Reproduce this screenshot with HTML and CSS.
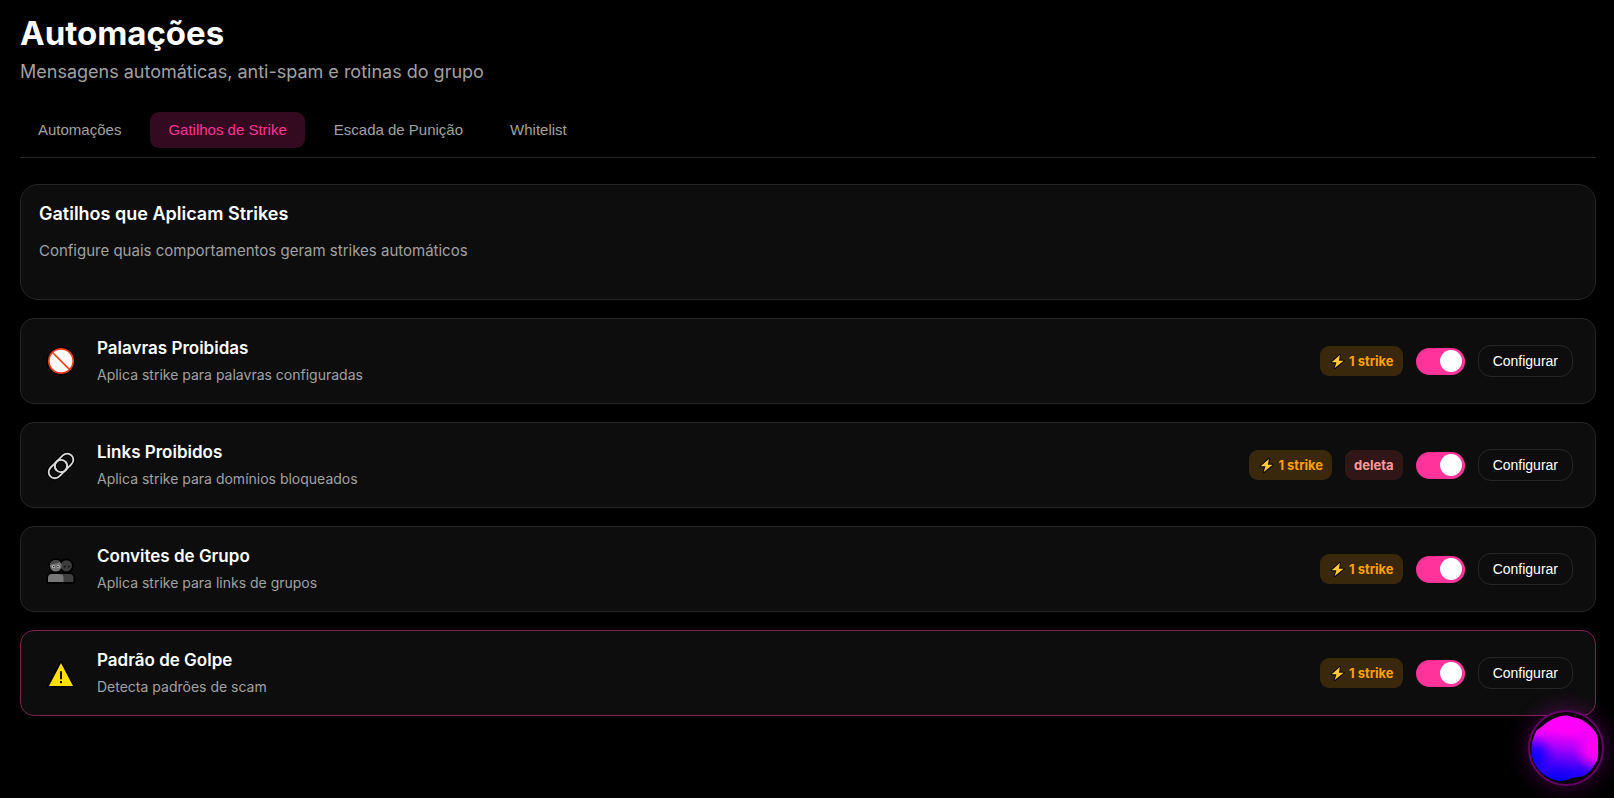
FILE: index.html
```html
<!DOCTYPE html>
<html lang="pt-BR">
<head>
<meta charset="utf-8">
<meta name="viewport" content="width=device-width, initial-scale=1">
<title>Automações</title>
<link rel="stylesheet" href="styles.css">
</head>
<body>
<svg class="sprite" aria-hidden="true">
  <symbol id="bolt" viewBox="0 0 16 16">
    <path d="M10.200 1.800 2.500 8.800H7L5.400 14.200 13.800 7.300H9.400z" fill="#ffc83d" stroke="#0a0a0a" stroke-width="2" stroke-linejoin="round"/>
    <path d="M10.200 1.800 2.500 8.800H7L5.400 14.200 13.800 7.300H9.400z" fill="#ffc83d"/>
  </symbol>
</svg>
<main class="page">
  <header>
    <h1 class="page-title">Automações</h1>
    <p class="page-subtitle">Mensagens automáticas, anti-spam e rotinas do grupo</p>
  </header>
  <nav class="tabs" aria-label="Seções">
    <button class="tab" type="button">Automações</button>
    <button class="tab tab-active" type="button">Gatilhos de Strike</button>
    <button class="tab" type="button">Escada de Punição</button>
    <button class="tab" type="button">Whitelist</button>
  </nav>
  <section class="list">
    <div class="intro">
      <h2 class="intro-title">Gatilhos que Aplicam Strikes</h2>
      <p class="intro-text">Configure quais comportamentos geram strikes automáticos</p>
    </div>

    <article class="rule">
      <svg class="rule-icon" viewBox="0 0 36 36" aria-hidden="true">
        <circle cx="18" cy="18" r="14.5" fill="#000"/>
        <circle cx="18" cy="18" r="12.2" fill="#fff" stroke="#f03a17" stroke-width="1.7"/>
        <path d="m9.5 9.5 17 17" stroke="#f03a17" stroke-width="1.7"/>
      </svg>
      <div class="rule-body">
        <h3 class="rule-title" id="r1">Palavras Proibidas</h3>
        <p class="rule-text">Aplica strike para palavras configuradas</p>
      </div>
      <div class="rule-actions">
        <span class="badge badge-strike"><svg class="bolt"><use href="#bolt"/></svg>1 strike</span>
        <input class="switch" type="checkbox" role="switch" aria-labelledby="r1" checked>
        <button class="config" type="button">Configurar</button>
      </div>
    </article>

    <article class="rule">
      <svg class="rule-icon" viewBox="-1 -2 38 38" aria-hidden="true">
        <g fill="none" transform="rotate(-45 18 18)">
          <g stroke="#000" stroke-width="4.6">
            <rect x="2.300" y="11.500" width="22.200" height="13" rx="6.500"/>
            <rect x="11.500" y="11.500" width="22.200" height="13" rx="6.500"/>
          </g>
          <g stroke="#d8d8d8" stroke-width="1.9">
            <path d="M22.500 13.200A6.500 6.500 0 0 0 18 11.500H8.800a6.500 6.500 0 0 0 0 13H18a6.500 6.500 0 0 0 6.500-6.500"/>
            <path d="M13.500 22.800A6.500 6.500 0 0 0 18 24.500h9.200a6.500 6.500 0 0 0 0-13H18a6.500 6.500 0 0 0-6.500 6.500"/>
            <circle cx="18" cy="18" r="6.500"/>
          </g>
        </g>
      </svg>
      <div class="rule-body">
        <h3 class="rule-title" id="r2">Links Proibidos</h3>
        <p class="rule-text">Aplica strike para domínios bloqueados</p>
      </div>
      <div class="rule-actions">
        <span class="badge badge-strike"><svg class="bolt"><use href="#bolt"/></svg>1 strike</span>
        <span class="badge badge-delete">deleta</span>
        <input class="switch" type="checkbox" role="switch" aria-labelledby="r2" checked>
        <button class="config" type="button">Configurar</button>
      </div>
    </article>

    <article class="rule">
      <svg class="rule-icon" viewBox="0 -2 36 36" aria-hidden="true">
        <g fill="#000" stroke="#000" stroke-width="3.4" stroke-linejoin="round">
          <circle cx="12.8" cy="12.8" r="5.8"/>
          <circle cx="23.2" cy="12.8" r="5.8"/>
          <path d="M5 29v-4a4 4 0 0 1 4-4h17.500a4 4 0 0 1 4 4v4z"/>
        </g>
        <circle cx="23.4" cy="12.8" r="5.6" fill="#3d3d3d"/>
        <path d="M16 29v-8h10.500a4 4 0 0 1 4 4v4z" fill="#3f3f3f"/>
        <circle cx="12.8" cy="12.8" r="5.8" fill="#747474"/>
        <path d="M7.200 11.500a5.800 5.800 0 0 1 9.800-2.800c-2 1.600-6 2-9.800 2.800" fill="#454545"/>
        <path d="M5 29v-4a4 4 0 0 1 4-4h7.500a4 4 0 0 1 4 4v4z" fill="#777"/>
        <g fill="#d0d0d0"><circle cx="10.500" cy="13.600" r="1.500"/><circle cx="15.200" cy="13.600" r="1.500"/></g>
        <g fill="#171717"><circle cx="10.700" cy="13.600" r=".8"/><circle cx="15" cy="13.600" r=".8"/><circle cx="21.700" cy="13.600" r="1.100"/><circle cx="25.800" cy="13.600" r="1.100"/></g>
      </svg>
      <div class="rule-body">
        <h3 class="rule-title" id="r3">Convites de Grupo</h3>
        <p class="rule-text">Aplica strike para links de grupos</p>
      </div>
      <div class="rule-actions">
        <span class="badge badge-strike"><svg class="bolt"><use href="#bolt"/></svg>1 strike</span>
        <input class="switch" type="checkbox" role="switch" aria-labelledby="r3" checked>
        <button class="config" type="button">Configurar</button>
      </div>
    </article>

    <article class="rule rule-alert">
      <svg class="rule-icon" viewBox="0 -2 36 36" aria-hidden="true">
        <path d="M18 6 6 29h24z" fill="#ffe000" stroke="#000" stroke-width="3.600" stroke-linejoin="round"/>
        <path d="M18 6 6 29h24z" fill="#ffe000"/>
        <path d="M17 14.200h2v8h-2zM17 24h2v2.200h-2z" fill="#111"/>
      </svg>
      <div class="rule-body">
        <h3 class="rule-title" id="r4">Padrão de Golpe</h3>
        <p class="rule-text">Detecta padrões de scam</p>
      </div>
      <div class="rule-actions">
        <span class="badge badge-strike"><svg class="bolt"><use href="#bolt"/></svg>1 strike</span>
        <input class="switch" type="checkbox" role="switch" aria-labelledby="r4" checked>
        <button class="config" type="button">Configurar</button>
      </div>
    </article>
  </section>
</main>
<button class="orb" type="button" aria-label="Assistente">
  <svg class="orb-art" viewBox="2 2 72 72" aria-hidden="true">
    <defs>
      <linearGradient id="orbBase" x1="0.4" y1="1" x2="0.55" y2="0">
        <stop offset="0" stop-color="#0500f5"/>
        <stop offset=".18" stop-color="#2a00f8"/>
        <stop offset=".5" stop-color="#a600fb"/>
        <stop offset=".75" stop-color="#ff00fa"/>
      </linearGradient>
      <radialGradient id="orbBlue" cx=".02" cy=".65" r=".36">
        <stop offset="0" stop-color="#0a00ff"/>
        <stop offset=".4" stop-color="#1a00ff" stop-opacity=".85"/>
        <stop offset="1" stop-color="#5000ff" stop-opacity="0"/>
      </radialGradient>
      <radialGradient id="orbPink" cx="1" cy=".48" r=".4">
        <stop offset="0" stop-color="#ff00f4"/>
        <stop offset=".45" stop-color="#fb00f6" stop-opacity=".9"/>
        <stop offset="1" stop-color="#d000ff" stop-opacity="0"/>
      </radialGradient>
      <path id="blob" d="M9 20C14 17 18 12 25 9c7-3 13-5 19-2 8 1 15 5 20 11 6 6 6 10 6 18 0 7 1 13-3 18-4 7-8 12-16 13-7 0-12 4-20 4C19 69 10 61 6 52 2 42 3 29 9 20z"/>
    </defs>
    <use href="#blob" fill="url(#orbBase)"/>
    <use href="#blob" fill="url(#orbBlue)"/>
    <use href="#blob" fill="url(#orbPink)"/>
  </svg>
</button>
</body>
</html>
```
FILE: styles.css
```css
* {
  box-sizing: border-box;
}

body {
  margin: 0;
  background: #000;
  color: #fff;
  font-family: Inter, "Liberation Sans", sans-serif;
}

h1, h2, h3, p {
  margin: 0;
}

.sprite {
  position: absolute;
  width: 0;
  height: 0;
}

.page {
  padding: 12px 18px 0 20px;
}

.page-title {
  font-size: 33px;
  line-height: 42px;
  font-weight: 700;
}

.page-subtitle {
  margin-top: 4px;
  font-size: 18px;
  line-height: 28px;
  color: #a1a1a1;
}

.tabs {
  display: flex;
  gap: 11px;
  margin-top: 26px;
  padding-bottom: 9px;
  border-bottom: 1px solid #262626;
}

.tab {
  height: 36px;
  padding: 0 18px 2px;
  border: 0;
  border-radius: 9px;
  background: transparent;
  color: #a1a1a1;
  font: 15px "Liberation Sans", Arial, sans-serif;
}

.tab-active {
  background: #330a1f;
  color: #ff3399;
}

.list {
  display: flex;
  flex-direction: column;
  gap: 18px;
  margin-top: 26px;
}

.intro {
  padding: 17px 18px 36px;
  border: 1px solid #262626;
  border-radius: 18px;
  background: #0d0d0d;
}

.intro-title {
  font-size: 18px;
  line-height: 24px;
  font-weight: 600;
}

.intro-text {
  margin-top: 12px;
  font-size: 15px;
  line-height: 25px;
  color: #a1a1a1;
}

.rule {
  display: flex;
  align-items: center;
  gap: 18px;
  padding: 17px 22px;
  border: 1px solid #262626;
  border-radius: 14px;
  background: #0d0d0d;
}

.rule-alert {
  border-color: #801f50;
}

.rule-icon {
  flex: none;
  width: 36px;
  height: 36px;
}

.rule-body {
  flex: 1;
}

.rule-title {
  font-size: 17px;
  line-height: 24px;
  font-weight: 600;
}

.rule-text {
  margin-top: 3px;
  font-size: 14px;
  line-height: 23px;
  color: #a1a1a1;
}

.rule-actions {
  display: flex;
  align-items: center;
  gap: 13px;
}

.badge {
  display: flex;
  align-items: center;
  gap: 3px;
  height: 30px;
  padding: 0 9px;
  border-radius: 9px;
  font-size: 13px;
  font-weight: 700;
}

.badge-strike {
  background: #3a280d;
  color: #ff9f0a;
}

.badge-delete {
  background: #311618;
  color: #ff9a9a;
}

.bolt {
  width: 17px;
  height: 17px;
}

.switch {
  appearance: none;
  width: 49px;
  height: 27px;
  margin: 0;
  padding: 0 3px;
  display: flex;
  align-items: center;
  border-radius: 14px;
  background: #333;
}

.switch::before {
  content: "";
  width: 22px;
  height: 22px;
  border-radius: 50%;
  background: #fff;
}

.switch:checked {
  justify-content: flex-end;
  background: #ff3399;
}

.config {
  height: 32px;
  padding: 0 14px;
  border: 1px solid #262626;
  border-radius: 13px;
  background: transparent;
  color: #fff;
  font: 14px "Liberation Sans", Arial, sans-serif;
}

.orb {
  position: fixed;
  right: 10px;
  bottom: 12px;
  width: 76px;
  height: 76px;
  padding: 0;
  border: 2px solid #650066;
  border-radius: 50%;
  background: #0b040c;
  box-shadow: 0 0 22px rgba(255, 0, 255, 0.28);
}

.orb-art {
  display: block;
  width: 72px;
  height: 72px;
}
```
